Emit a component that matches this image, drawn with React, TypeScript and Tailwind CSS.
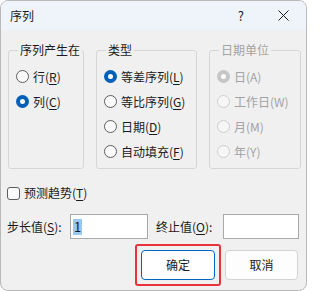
import React from 'react'

const font = { fontFamily: '"Noto Sans CJK SC", "Noto Sans", sans-serif' }

type RadioProps = {
  label: string
  hotkey?: string
  rest?: string
  checked?: boolean
  disabled?: boolean
}

function Radio({ label, hotkey, rest, checked, disabled }: RadioProps) {
  let circle = 'border border-[#5d5d5d] bg-[#fbfbfb]'
  if (checked && !disabled) circle = 'bg-[#005fb8]'
  if (checked && disabled) circle = 'bg-[#c6c6c6]'
  if (!checked && disabled) circle = 'border border-[#cfcfcf] bg-[#f6f6f6]'
  return (
    <div className={`flex items-center h-[25px] ${disabled ? 'text-[#a3a3a3]' : 'text-[#1a1a1a]'}`}>
      <span className={`w-[13px] h-[13px] rounded-full flex items-center justify-center shrink-0 ${circle}`}>
        {checked && <span className="w-[5px] h-[5px] rounded-full bg-white"></span>}
      </span>
      <span className="ml-[4px] text-[12px] leading-[16px] whitespace-nowrap">
        {label}
        {hotkey ? <>(<span className="underline underline-offset-2">{hotkey}</span>)</> : rest}
      </span>
    </div>
  )
}

function Group({ title, disabled, children, width }: { title: string, disabled?: boolean, children: React.ReactNode, width: string }) {
  return (
    <fieldset className={`border border-[#d6d6d6] rounded-[3px] pt-[6px] pb-[4px] pl-[7px] ${width}`}>
      <legend className={`ml-[2px] px-[2px] text-[12px] leading-[16px] ${disabled ? 'text-[#a3a3a3]' : 'text-[#1a1a1a]'}`}>{title}</legend>
      {children}
    </fieldset>
  )
}

function App() {
  return (
    <div className="w-[307px] h-[291px] bg-white" style={font}>
      <div className="w-[307px] h-[291px] border border-[#b9b9b9] rounded-[8px] overflow-hidden bg-[#f0f0f0] flex flex-col">
        {/* title bar */}
        <div className="h-[29px] bg-[#eef4f9] flex items-center shrink-0">
          <span className="ml-[9px] text-[12px] text-[#1a1a1a]">序列</span>
          <span className="ml-auto mr-[34px] text-[13px] text-[#1a1a1a]">?</span>
          <svg width="11" height="11" viewBox="0 0 11 11" className="mr-[17px]">
            <path d="M0.5 0.5 L10.5 10.5 M10.5 0.5 L0.5 10.5" stroke="#1a1a1a" strokeWidth="1" />
          </svg>
        </div>

        {/* groups */}
        <div className="flex items-stretch gap-[12px] ml-[7px] mt-[12px]">
          <Group title="序列产生在" width="w-[76px]">
            <Radio label="行" hotkey="R" />
            <Radio label="列" hotkey="C" checked />
          </Group>
          <Group title="类型" width="w-[101px]">
            <Radio label="等差序列" hotkey="L" checked />
            <Radio label="等比序列" hotkey="G" />
            <Radio label="日期" hotkey="D" />
            <Radio label="自动填充" hotkey="F" />
          </Group>
          <Group title="日期单位" width="w-[92px]" disabled>
            <Radio label="日" rest="(A)" checked disabled />
            <Radio label="工作日" rest="(W)" disabled />
            <Radio label="月" rest="(M)" disabled />
            <Radio label="年" rest="(Y)" disabled />
          </Group>
        </div>

        {/* checkbox */}
        <div className="flex items-center h-[20px] mt-[14px] ml-[6px]">
          <span className="w-[13px] h-[13px] rounded-[3px] border border-[#5d5d5d] bg-[#fbfbfb]"></span>
          <span className="ml-[4px] text-[12px] leading-[16px] text-[#1a1a1a]">
            预测趋势(<span className="underline underline-offset-2">T</span>)
          </span>
        </div>

        {/* inputs */}
        <div className="flex items-center h-[25px] mt-[11px] ml-[6px]">
          <span className="w-[63px] text-[12px] text-[#1a1a1a] whitespace-nowrap">
            步长值(<span className="underline underline-offset-2">S</span>):
          </span>
          <div className="w-[78px] h-[25px] border border-[#a9a9a9] bg-white flex items-center pl-[2px]">
            <span className="bg-[#99c9ef] text-[13px] leading-[16px] px-[1px] text-[#1a1a1a]">1</span>
          </div>
          <span className="ml-[8px] w-[67px] text-[12px] text-[#1a1a1a] whitespace-nowrap">
            终止值(<span className="underline underline-offset-2">O</span>):
          </span>
          <div className="w-[76px] h-[25px] border border-[#a9a9a9] bg-white"></div>
        </div>

        {/* buttons */}
        <div className="flex items-center justify-end gap-[4px] mt-[5px] pr-[8px]">
          <div className="border-2 border-[#e8333a] rounded-[3px] p-[4px]">
            <button className="w-[74px] h-[30px] rounded-[4px] border border-[#0067c0] bg-white text-[12px] text-[#1a1a1a]">确定</button>
          </div>
          <button className="w-[73px] h-[30px] rounded-[4px] border border-[#d3d3d3] bg-[#fdfdfd] text-[12px] text-[#1a1a1a]">取消</button>
        </div>
      </div>
    </div>
  )
}

export default App
